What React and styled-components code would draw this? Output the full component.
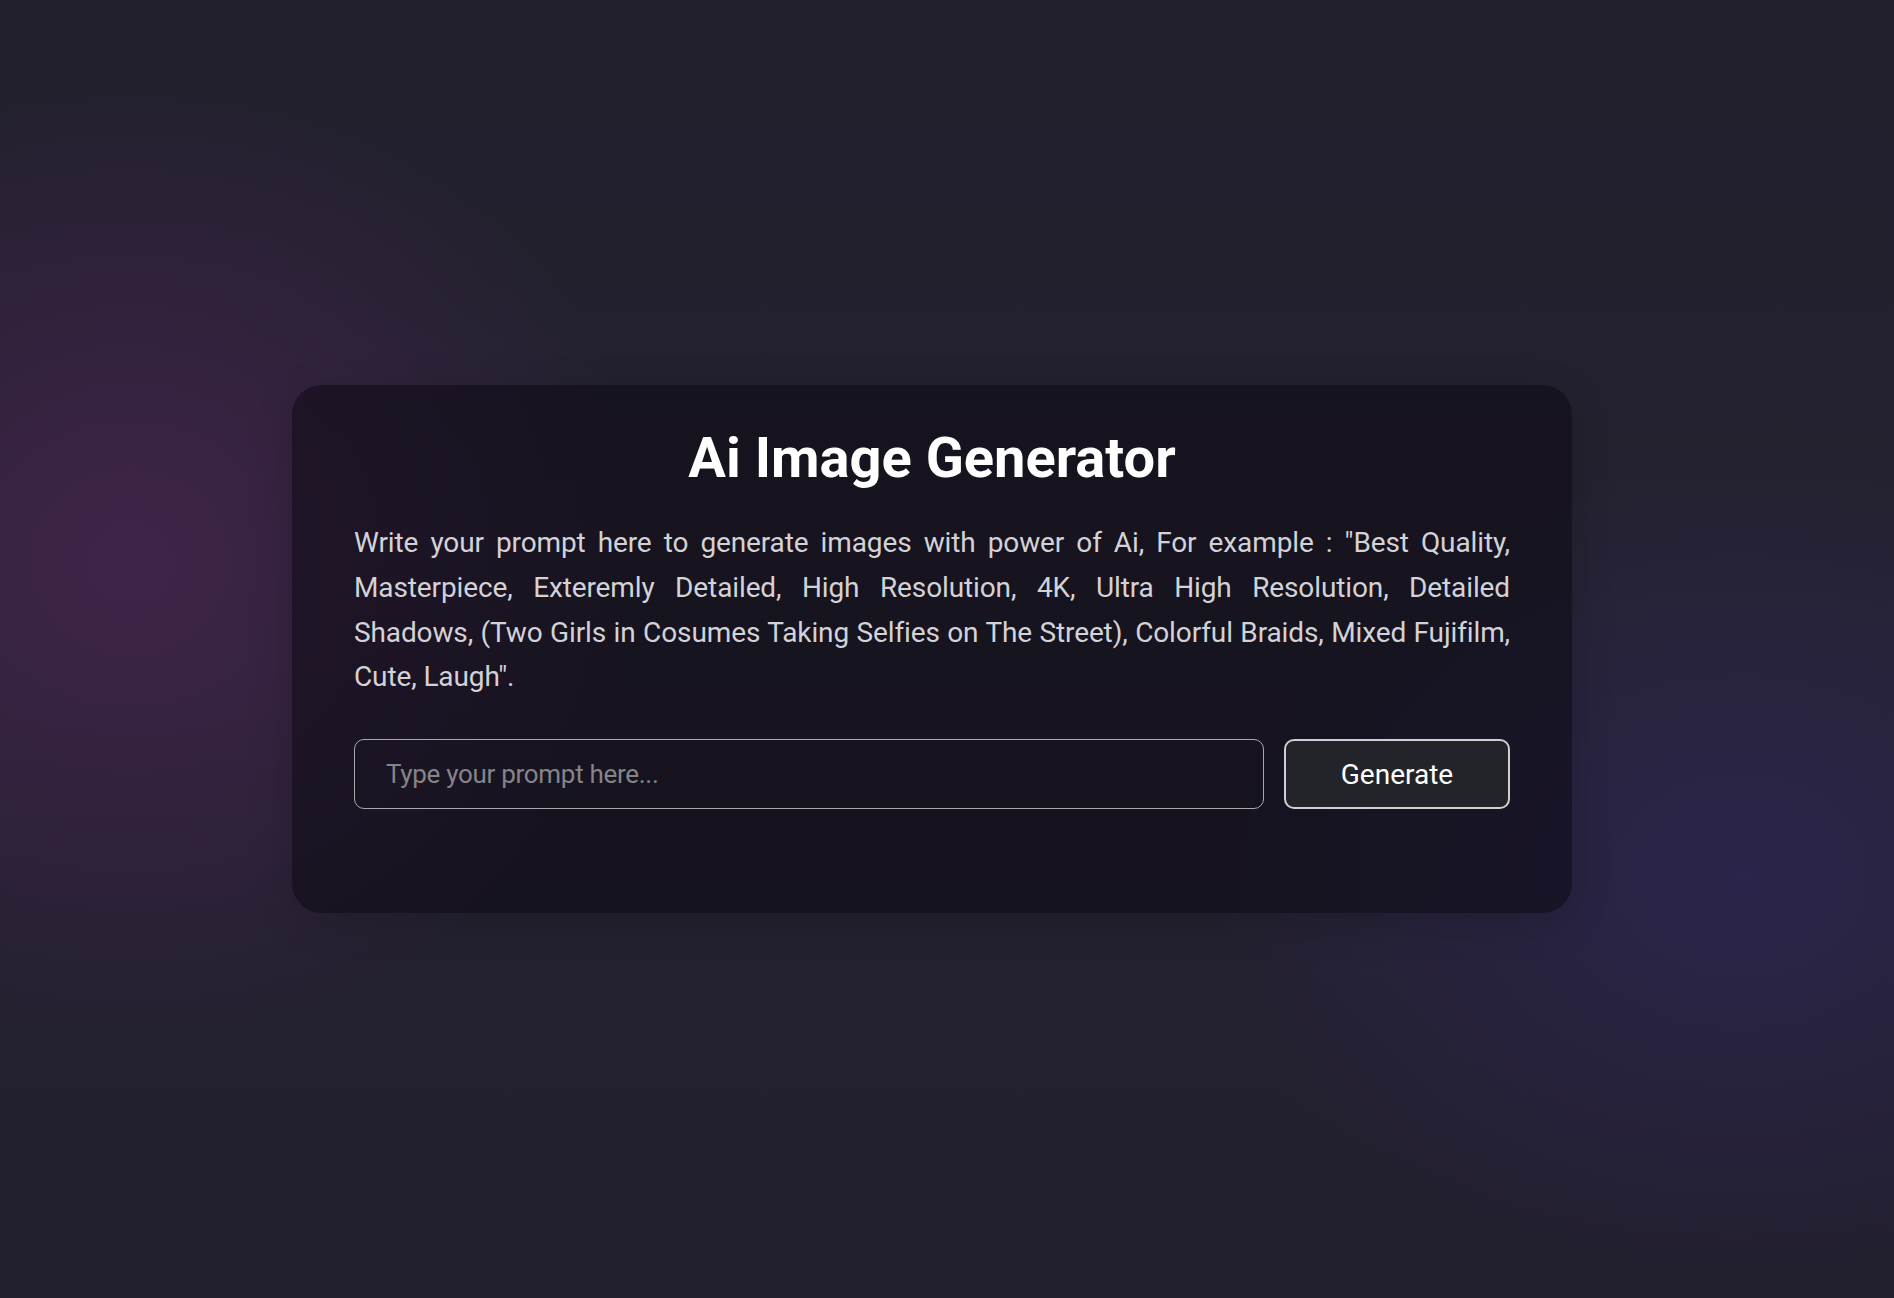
import { useState } from 'react';
import styled, { createGlobalStyle } from 'styled-components';

const GlobalStyle = createGlobalStyle`
  * {
    box-sizing: border-box;
  }
  body {
    margin: 0;
    font-family: 'Roboto', 'Liberation Sans', sans-serif;
    background: #221f2d;
  }
`;

const Page = styled.main`
  min-height: 100vh;
  display: flex;
  justify-content: center;
  align-items: center;
  padding: 0 30px 0 0;
  background:
    radial-gradient(ellipse 720px 680px at 130px 560px, rgba(68, 36, 78, 0.85), transparent 72%),
    radial-gradient(ellipse 720px 560px at 1740px 880px, rgba(46, 38, 86, 0.7), transparent 74%),
    linear-gradient(180deg, #22202d 0%, #252231 50%, #221f2e 100%);
`;

const Card = styled.section`
  width: 1280px;
  padding: 40px 62px 104px;
  border-radius: 30px;
  background: rgba(8, 6, 14, 0.5);
  box-shadow: 0 10px 40px rgba(0, 0, 0, 0.15);
  display: flex;
  flex-direction: column;
`;

const Title = styled.h1`
  margin: 0 0 30px;
  font-size: 56px;
  font-weight: 700;
  line-height: normal;
  color: #ffffff;
  text-align: center;
`;

const Description = styled.p`
  margin: 0 0 39px;
  font-size: 28px;
  line-height: 1.6;
  letter-spacing: -0.12px;
  color: #d3d2d6;
  text-align: justify;
`;

const Form = styled.form`
  display: flex;
  gap: 20px;
`;

const PromptInput = styled.input`
  flex: 1;
  height: 70px;
  padding: 0 31px;
  border: 1.5px solid #a9a8ad;
  border-radius: 10px;
  background: transparent;
  color: #e6e6e6;
  font-family: inherit;
  font-size: 26px;
  letter-spacing: -0.3px;
  outline: none;

  &::placeholder {
    color: #858489;
  }
`;

const GenerateButton = styled.button`
  width: 226px;
  height: 70px;
  border: 2px solid #cfcfd2;
  border-radius: 10px;
  background: #22242a;
  color: #ffffff;
  font-family: inherit;
  font-size: 28px;
  font-weight: 400;
  cursor: pointer;
`;

const App = () => {
  const [prompt, setPrompt] = useState('');

  const handleSubmit = (e) => {
    e.preventDefault();
  };

  return (
    <>
      <GlobalStyle />
      <Page>
        <Card>
          <Title>Ai Image Generator</Title>
          <Description>
            Write your prompt here to generate images with power of Ai, For example : "Best Quality,
            Masterpiece, Exteremly Detailed, High Resolution, 4K, Ultra High Resolution, Detailed
            Shadows, (Two Girls in Cosumes Taking Selfies on The Street), Colorful Braids, Mixed
            Fujifilm, Cute, Laugh".
          </Description>
          <Form onSubmit={handleSubmit}>
            <PromptInput
              type="text"
              placeholder="Type your prompt here..."
              value={prompt}
              onChange={(e) => setPrompt(e.target.value)}
            />
            <GenerateButton type="submit">Generate</GenerateButton>
          </Form>
        </Card>
      </Page>
    </>
  );
};

export default App;
